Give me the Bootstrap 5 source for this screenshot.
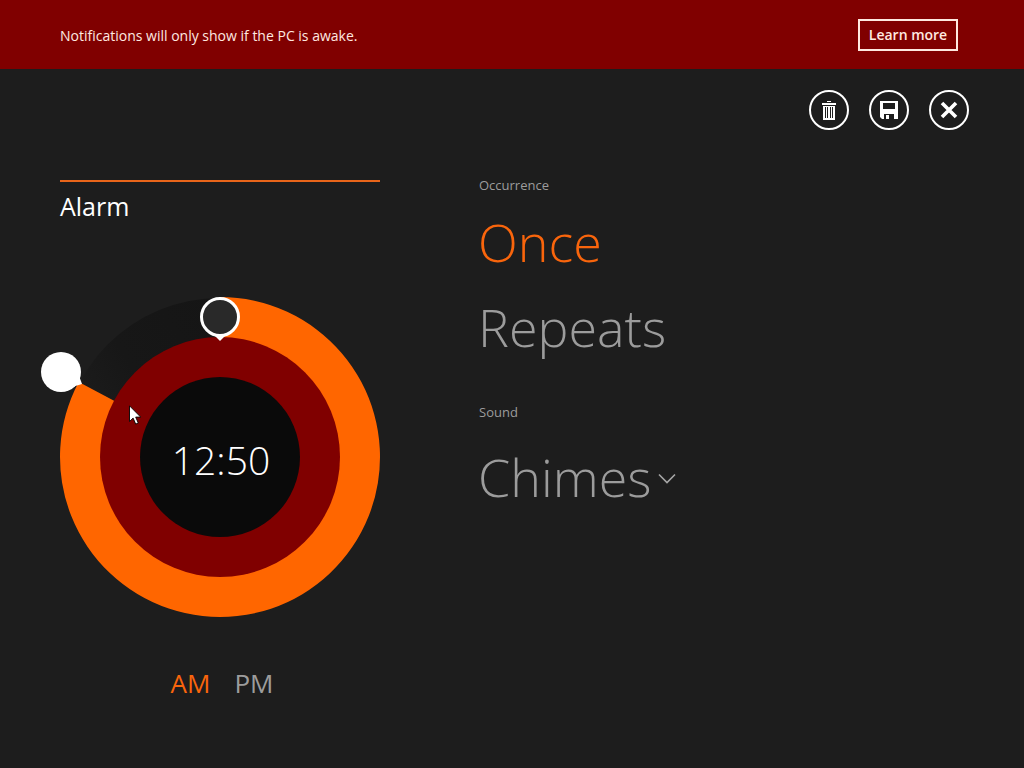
<!DOCTYPE html>
<html lang="en">
<head>
<meta charset="utf-8">
<meta name="viewport" content="width=device-width, initial-scale=1">
<title>Alarm</title>
<link href="https://cdn.jsdelivr.net/npm/bootstrap@5.3.0/dist/css/bootstrap.min.css" rel="stylesheet">
<style>
  body { background: #1d1d1d; color: #fff; font-family: "Open Sans", "Noto Sans", sans-serif; font-weight: 300; }
  .notice { background: #800000; color: #ffe9e0; padding: 19px 66px 18px 60px; font-size: 14px; font-weight: 400; line-height: 20px; }
  .notice span { padding-top: 2px; }
  .btn-learn { border: 2px solid #ffe9e0; border-radius: 0; color: #ffe9e0; font-size: 14px; font-weight: 600; line-height: 20px; width: 100px; height: 32px; padding: 0; }
  .commands { padding: 21px 55px 0 60px; gap: 20px; }
  .btn-round { width: 40px; height: 40px; padding: 0; border: 2px solid #fff; border-radius: 50%; color: #fff; }
  .btn-learn:hover, .btn-round:hover { background: #fff; color: #1d1d1d; }
  .editor { padding: 45px 60px 60px; column-gap: 98px; }
  .clock-pane { width: 320px; margin-top: 5px; }
  .alarm-name { border-top: 2px solid #e8651a; font-size: 25px; font-weight: 400; line-height: 32px; padding-top: 8px; margin-bottom: 75px; }
  .dial { overflow: visible; }
  .dial-time { font-size: 39px; font-weight: 300; fill: #fff; }
  .half-day { font-size: 26px; line-height: 32px; margin-top: 50px; gap: 24px; padding-left: 4px; }
  .choice { border: 0; background: none; color: #9c9c9c; padding: 0; text-align: left; font-weight: 400; }
  .choice.active { color: #f9650c; }
  .choice-big { font-size: 52px; font-weight: 300; line-height: 85px; }
  .caption { font-size: 13px; font-weight: 400; line-height: 20px; color: #9c9c9c; margin: 0 0 4px; padding-left: 1px; }
  .sound-field { margin-top: 33px; }
  .sound-field .caption { display: block; margin-bottom: 12px; }
  .sound-select { width: 198px; padding: 0; border: 0; border-radius: 0; color: #9c9c9c; font-size: 52px; font-weight: 300; line-height: 85px;
    background: url("data:image/svg+xml,%3Csvg xmlns='http://www.w3.org/2000/svg' viewBox='0 0 18 16'%3E%3Cpath d='M1 5.5l8 8 8-8' fill='none' stroke='%23a6a6a6' stroke-width='1.6'/%3E%3C/svg%3E") right center / 18px 16px no-repeat; }
  .pointer { position: absolute; left: 69px; top: 108px; }
</style>
</head>
<body>
<header class="notice d-flex justify-content-between align-items-center">
  <span>Notifications will only show if the PC is awake.</span>
  <button type="button" class="btn btn-learn">Learn more</button>
</header>
<main>
  <div class="commands d-flex justify-content-end">
    <button type="button" class="btn btn-round" aria-label="Delete">
      <svg class="d-block" width="36" height="36" viewBox="0 0 36 36" fill="currentColor" aria-hidden="true">
        <path d="M16 9h4v1h-4zM11 11h14v2H11z"/>
        <path fill-rule="evenodd" d="M12 14h12v14H12zM14 15v11h1V15zM16 15v11h1V15zM19 15v11h1V15zM21 15v11h1V15z"/>
      </svg>
    </button>
    <button type="button" class="btn btn-round" aria-label="Save">
      <svg class="d-block" width="36" height="36" viewBox="0 0 36 36" fill="currentColor" aria-hidden="true">
        <path fill-rule="evenodd" d="M9 9h18v18h-4v-5H13v5h-2l-2-2zM12 11v6h12v-6z"/>
        <path d="M15 23h3v4h-3z"/>
      </svg>
    </button>
    <button type="button" class="btn btn-round" aria-label="Cancel">
      <svg class="d-block" width="36" height="36" viewBox="0 0 36 36" fill="none" stroke="currentColor" stroke-width="3.6" aria-hidden="true">
        <path d="M11 11l14 14M25 11L11 25"/>
      </svg>
    </button>
  </div>
  <div class="editor d-flex flex-wrap">
    <section class="clock-pane">
      <h1 class="alarm-name">Alarm</h1>
      <div class="position-relative">
        <svg class="dial d-block w-100" viewBox="0 0 320 320" role="img" aria-label="Alarm time 12:50">
          <defs>
            <linearGradient id="track" x1="0" y1="0.3" x2="0.5" y2="0">
              <stop offset="0" stop-color="#1d1d1d"/>
              <stop offset="0.4" stop-color="#171717"/>
              <stop offset="1" stop-color="#151515"/>
            </linearGradient>
          </defs>
          <circle cx="160" cy="160" r="159" fill="url(#track)"/>
          <path d="M160 160L160 0A160 160 0 1 1 18.73 84.88z" fill="#ff6600"/>
          <circle cx="160" cy="160" r="120" fill="#800000"/>
          <circle cx="160" cy="160" r="80" fill="#0a0a0a"/>
          <path d="M153 37h14l-7 7z" fill="#fff"/>
          <circle cx="160" cy="20" r="18.5" fill="#292929" stroke="#fff" stroke-width="3"/>
          <path d="M19.5 80l2.5 7-10 3z" fill="#fff"/>
          <circle cx="1" cy="75" r="20" fill="#fff"/>
          <text class="dial-time" x="161" y="178" text-anchor="middle">12:50</text>
        </svg>
        <svg class="pointer" width="12" height="20" viewBox="0 0 12 20" aria-hidden="true">
          <path d="M.5.8v15.7l3.6-3.4 2.6 6 2.6-1.1-2.6-5.9h5z" fill="#fff" stroke="#000" stroke-width=".9"/>
        </svg>
      </div>
      <div class="half-day d-flex justify-content-center">
        <button type="button" class="choice active">AM</button>
        <button type="button" class="choice">PM</button>
      </div>
    </section>
    <section class="d-flex flex-column align-items-start">
      <p class="caption">Occurrence</p>
      <button type="button" class="choice choice-big active">Once</button>
      <button type="button" class="choice choice-big">Repeats</button>
      <div class="sound-field">
        <label class="caption" for="sound">Sound</label>
        <select id="sound" class="form-select sound-select"><option>Chimes</option></select>
      </div>
    </section>
  </div>
</main>
<script src="https://cdn.jsdelivr.net/npm/bootstrap@5.3.0/dist/js/bootstrap.bundle.min.js"></script>
</body>
</html>
